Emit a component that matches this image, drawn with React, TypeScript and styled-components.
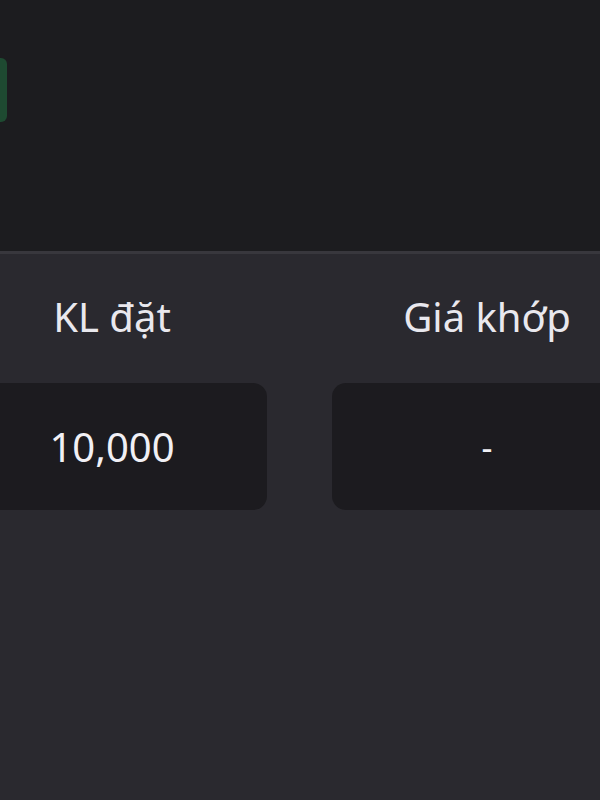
import React from 'react';
import styled, { createGlobalStyle } from 'styled-components';

let GlobalStyle = createGlobalStyle`
  html, body {
    margin: 0;
    padding: 0;
    background: #2a292f;
    overflow: hidden;
  }
  body {
    font-family: 'Noto Sans', 'Open Sans', sans-serif;
  }
`;

let Screen = styled.div`
  width: 600px;
  height: 800px;
  display: flex;
  flex-direction: column;
  overflow: hidden;
  background: #2a292f;
`;

let TopBar = styled.div`
  height: 254px;
  flex-shrink: 0;
  background: #1c1c1f;
  border-bottom: 3px solid #38373d;
  padding-top: 58px;
  box-sizing: border-box;
`;

let StatusTab = styled.div`
  width: 7px;
  height: 64px;
  background: #1e4a31;
  border-radius: 0 6px 6px 0;
`;

let OrderGrid = styled.div`
  width: 685px;
  margin-left: -43px;
  display: grid;
  grid-template-columns: 310px 310px;
  column-gap: 65px;
`;

let Label = styled.div`
  height: 129px;
  display: flex;
  align-items: center;
  justify-content: center;
  font-size: 40px;
  color: #e9e8ee;
  padding-bottom: 4px;
  box-sizing: border-box;
`;

let ValueBox = styled.div`
  height: 127px;
  border-radius: 14px;
  background: #1c1b1f;
  display: flex;
  align-items: center;
  justify-content: center;
  font-size: 40px;
  color: #f1f0f5;
`;

let Dash = styled.span`
  font-size: 34px;
`;

export default function App() {
  return (
    <>
      <GlobalStyle />
      <Screen>
        <TopBar>
          <StatusTab />
        </TopBar>
        <OrderGrid>
          <Label>KL đặt</Label>
          <Label>Giá khớp</Label>
          <ValueBox>10,000</ValueBox>
          <ValueBox>
            <Dash>-</Dash>
          </ValueBox>
        </OrderGrid>
      </Screen>
    </>
  );
}
